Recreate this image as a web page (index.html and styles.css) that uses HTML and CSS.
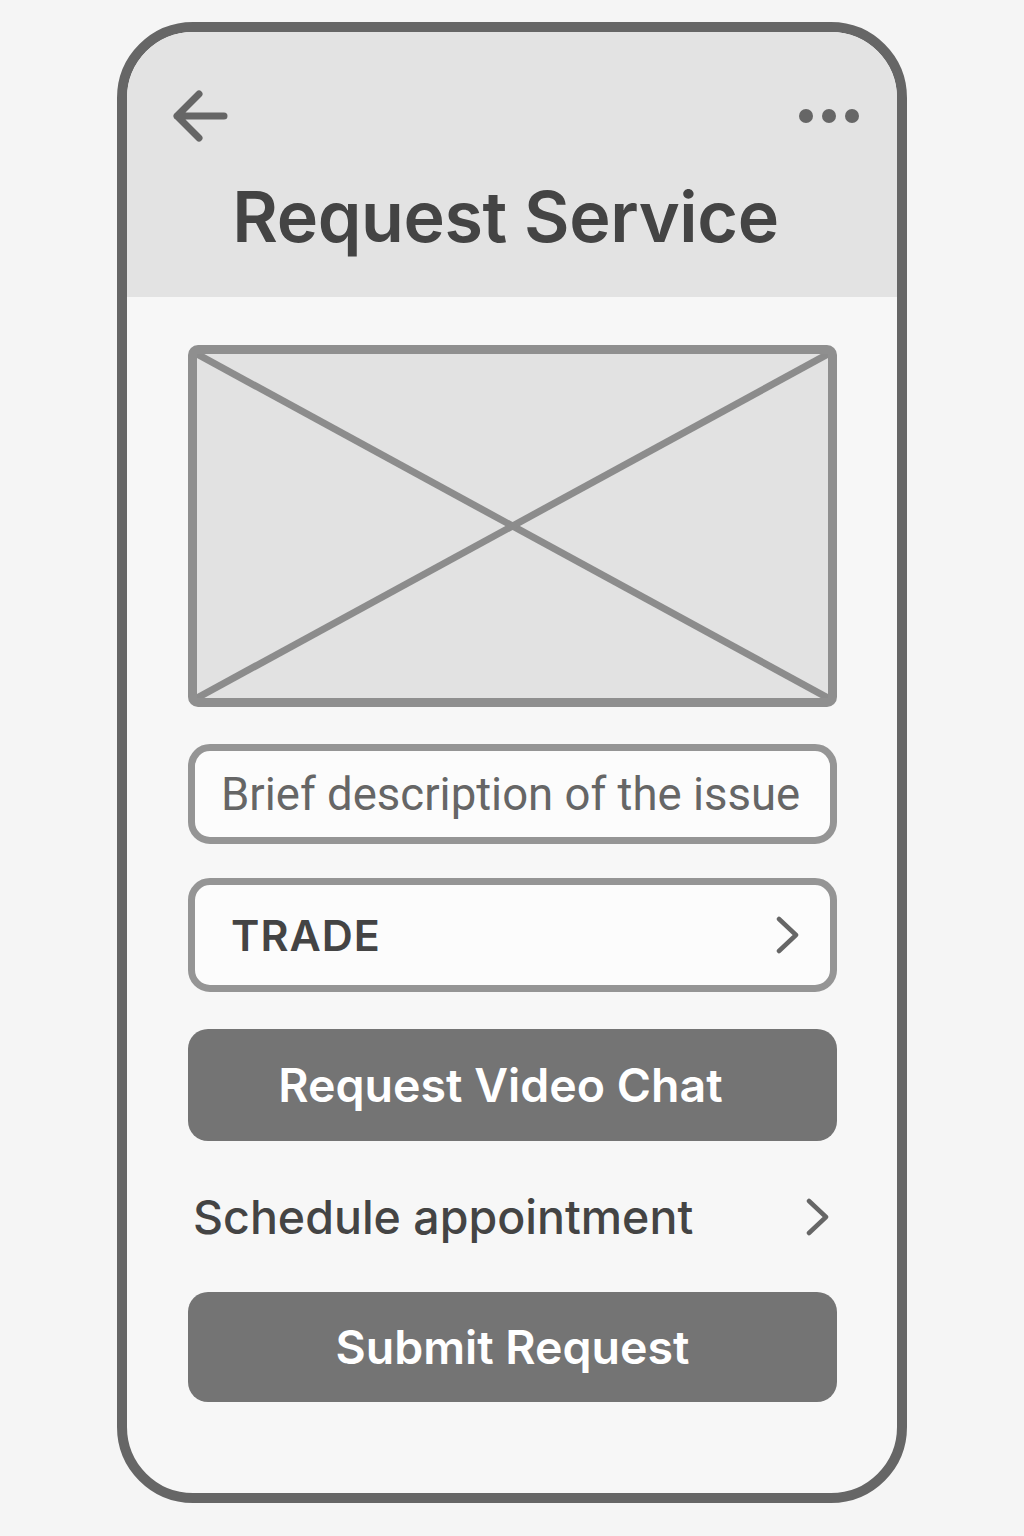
FILE: index.html
```html
<!DOCTYPE html>
<html>
<head>
    <title>Request Service</title>
    <meta name="viewport" content="width=device-width, initial-scale=1">
    <link rel="stylesheet" href="styles.css">
</head>
<body>
    <div class="phone">
        <div class="header">
            <div class="topbar">
                <svg class="back" width="56" height="52" viewBox="0 0 56 52">
                    <path d="M27 4 L5 26 L27 48 M5 26 L52 26" fill="none" stroke="#666" stroke-width="7" stroke-linecap="round" stroke-linejoin="round"/>
                </svg>
                <div class="dots"><span></span><span></span><span></span></div>
            </div>
            <h1>Request Service</h1>
        </div>

        <div class="content">
            <div class="placeholder">
                <svg viewBox="0 0 100 100" preserveAspectRatio="none">
                    <line x1="0" y1="0" x2="100" y2="100" stroke="#8c8c8c" stroke-width="7" vector-effect="non-scaling-stroke"/>
                    <line x1="100" y1="0" x2="0" y2="100" stroke="#8c8c8c" stroke-width="7" vector-effect="non-scaling-stroke"/>
                </svg>
            </div>

            <div class="field">Brief description of the issue</div>

            <div class="field select">
                <span>TRADE</span>
                <svg width="24" height="38" viewBox="0 0 24 38">
                    <path d="M3 3 L20 19 L3 35" fill="none" stroke="#666" stroke-width="4.5" stroke-linecap="round" stroke-linejoin="round"/>
                </svg>
            </div>

            <button class="btn video">Request Video Chat</button>

            <div class="link-row">
                <span>Schedule appointment</span>
                <svg width="24" height="38" viewBox="0 0 24 38">
                    <path d="M3 3 L20 19 L3 35" fill="none" stroke="#666" stroke-width="4.5" stroke-linecap="round" stroke-linejoin="round"/>
                </svg>
            </div>

            <button class="btn">Submit Request</button>
        </div>
    </div>
</body>
</html>
```

FILE: styles.css
```css
body {
    margin: 0;
    background-color: #f5f5f5;
    font-family: Inter, "Liberation Sans", sans-serif;
    color: #444;
}
.phone {
    width: 770px;
    height: 1461px;
    margin: 22px auto 0;
    border: 10px solid #666;
    border-radius: 76px;
    background-color: #f7f7f7;
    overflow: hidden;
    display: flex;
    flex-direction: column;
}
.header {
    background-color: #e3e3e3;
    height: 265px;
    padding: 0 38px 0 45px;
}
.topbar {
    display: flex;
    justify-content: space-between;
    align-items: center;
    padding-top: 58px;
}
.back {
    display: block;
}
.dots {
    display: flex;
    gap: 9px;
}
.dots span {
    width: 14px;
    height: 14px;
    border-radius: 50%;
    background-color: #666;
}
h1 {
    margin: 40px 0 0;
    padding-right: 20px;
    text-align: center;
    font-size: 70px;
    font-weight: 600;
    line-height: 1;
    letter-spacing: -0.4px;
    color: #444;
}
.content {
    display: flex;
    flex-direction: column;
    padding: 48px 60px 0 61px;
}
.placeholder {
    height: 344px;
    border: 9px solid #8f8f8f;
    border-radius: 10px;
    background-color: #e2e2e2;
}
.placeholder svg {
    display: block;
    width: 100%;
    height: 100%;
}
.field {
    box-sizing: border-box;
    height: 100px;
    margin-top: 37px;
    border: 7px solid #959595;
    border-radius: 22px;
    background-color: #fcfcfc;
    padding: 0 26px;
    display: flex;
    align-items: center;
    font-family: Roboto, "Liberation Sans", sans-serif;
    font-size: 45.5px;
    color: #666;
}
.select {
    height: 114px;
    margin-top: 34px;
    justify-content: space-between;
    padding: 0 30px 0 36px;
    font-family: Inter, "Liberation Sans", sans-serif;
    font-size: 43px;
    font-weight: 600;
    letter-spacing: 1px;
    color: #444;
}
.select svg, .link-row svg {
    display: block;
}
.btn {
    height: 112px;
    margin-top: 37px;
    border: none;
    border-radius: 20px;
    background-color: #747474;
    color: #fff;
    font-family: Inter, "Liberation Sans", sans-serif;
    font-size: 46.5px;
    font-weight: 600;
}
.video {
    padding-right: 30px;
}
.link-row {
    height: 151px;
    display: flex;
    justify-content: space-between;
    align-items: center;
    padding: 0 7px 0 5px;
    font-size: 46.5px;
    font-weight: 500;
    color: #444;
}
.link-row + .btn {
    margin-top: 0;
    height: 110px;
}
```
